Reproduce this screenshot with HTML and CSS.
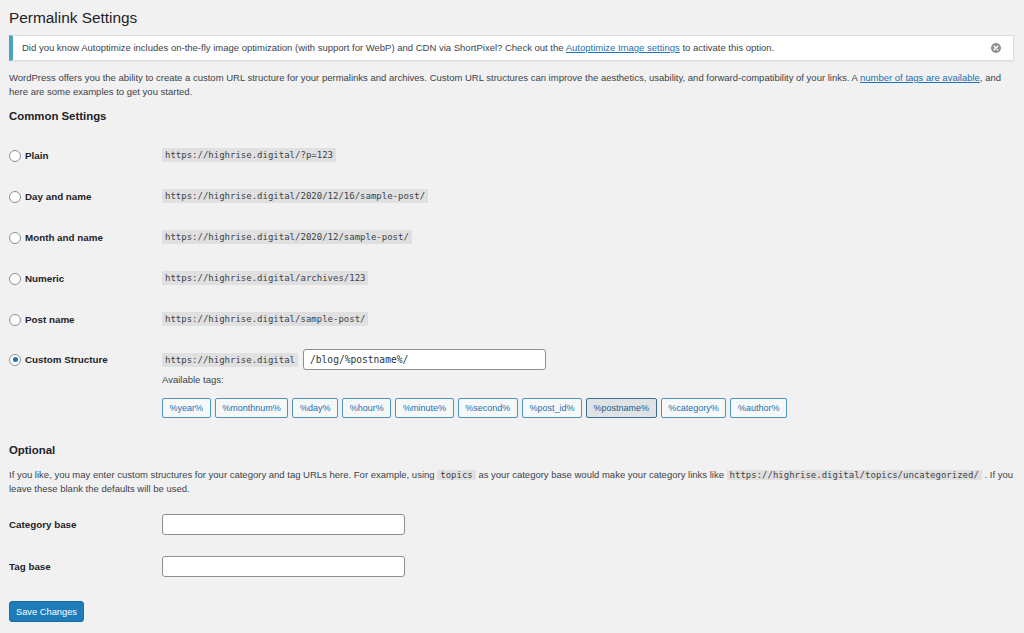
FILE: index.html
```html
<!DOCTYPE html>
<html lang="en">
<head>
<meta charset="utf-8">
<title>Permalink Settings</title>
<link rel="stylesheet" href="styles.css">
</head>
<body>
<div class="wrap">
  <h1 class="title">Permalink Settings</h1>
  <div class="notice">
    <p>Did you know Autoptimize includes on-the-fly image optimization (with support for WebP) and CDN via ShortPixel? Check out the <a href="#">Autoptimize Image settings</a> to activate this option.</p>
    <span class="dismiss"><svg width="10" height="10" viewBox="0 0 10 10"><circle cx="5" cy="5" r="5" fill="#8c8f94"/><path d="M3.2 3.2 L6.8 6.8 M6.8 3.2 L3.2 6.8" stroke="#fff" stroke-width="1.4" stroke-linecap="round"/></svg></span>
  </div>
  <p class="intro">WordPress offers you the ability to create a custom URL structure for your permalinks and archives. Custom URL structures can improve the aesthetics, usability, and forward-compatibility of your links. A <a href="#">number of tags are available</a>, and here are some examples to get you started.</p>
  <h2 class="section">Common Settings</h2>
  <div class="form">
    <div class="row">
      <label class="lbl"><span class="radio"></span>Plain</label>
      <div class="val"><code>https://highrise.digital/?p=123</code></div>
    </div>
    <div class="row">
      <label class="lbl"><span class="radio"></span>Day and name</label>
      <div class="val"><code>https://highrise.digital/2020/12/16/sample-post/</code></div>
    </div>
    <div class="row">
      <label class="lbl"><span class="radio"></span>Month and name</label>
      <div class="val"><code>https://highrise.digital/2020/12/sample-post/</code></div>
    </div>
    <div class="row">
      <label class="lbl"><span class="radio"></span>Numeric</label>
      <div class="val"><code>https://highrise.digital/archives/123</code></div>
    </div>
    <div class="row">
      <label class="lbl"><span class="radio"></span>Post name</label>
      <div class="val"><code>https://highrise.digital/sample-post/</code></div>
    </div>
    <div class="row custom">
      <label class="lbl"><span class="radio checked"></span>Custom Structure</label>
      <div class="val">
        <div class="structure"><code>https://highrise.digital</code><span class="input wide mono">/blog/%postname%/</span></div>
        <div class="avail">Available tags:</div>
        <div class="tags">
          <span class="tag">%year%</span>
          <span class="tag">%monthnum%</span>
          <span class="tag">%day%</span>
          <span class="tag">%hour%</span>
          <span class="tag">%minute%</span>
          <span class="tag">%second%</span>
          <span class="tag">%post_id%</span>
          <span class="tag active">%postname%</span>
          <span class="tag">%category%</span>
          <span class="tag">%author%</span>
        </div>
      </div>
    </div>
  </div>
  <h2 class="section optional">Optional</h2>
  <p class="intro opt">If you like, you may enter custom structures for your category and tag URLs here. For example, using <code>topics</code> as your category base would make your category links like <code>https://highrise.digital/topics/uncategorized/</code> . If you leave these blank the defaults will be used.</p>
  <div class="form opt-form">
    <div class="row2">
      <label class="lbl plain">Category base</label>
      <span class="input"></span>
    </div>
    <div class="row2">
      <label class="lbl plain">Tag base</label>
      <span class="input"></span>
    </div>
  </div>
  <button class="save">Save Changes</button>
</div>
</body>
</html>
```
FILE: styles.css
```css
html, body {
  margin: 0;
  padding: 0;
  background: #f1f1f1;
}
body {
  font-family: "Liberation Sans", Arial, sans-serif;
  font-size: 9.5px;
  color: #3c434a;
}
.wrap {
  padding: 0 10px 0 9px;
}
a {
  color: #2271b1;
}
.title {
  margin: 8px 0 0;
  font-size: 15.4px;
  line-height: 20px;
  font-weight: 400;
  color: #1d2327;
}
.notice {
  margin-top: 7px;
  height: 26px;
  box-sizing: border-box;
  background: #fff;
  border: 1px solid #dcdcde;
  border-left: 4px solid #4ba3c0;
  display: flex;
  align-items: center;
  justify-content: space-between;
  padding: 0 12px 0 9px;
  box-shadow: 0 1px 1px rgba(0,0,0,.04);
}
.notice p {
  margin: 0;
  line-height: 14px;
}
.dismiss {
  display: flex;
}
.intro {
  margin: 10px 0 0;
  line-height: 14px;
}
.section {
  margin: 10px 0 0;
  font-size: 11.4px;
  line-height: 14px;
  font-weight: 700;
  color: #1d2327;
}
.form {
  margin-top: 12px;
}
.row {
  display: grid;
  grid-template-columns: 153px 1fr;
  padding: 13px 0;
  line-height: 15px;
}
.row.custom {
  padding: 9px 0 0;
}
.row.custom .lbl {
  height: 21px;
}
.lbl {
  display: flex;
  align-items: center;
  font-size: 9.8px;
  font-weight: 700;
  color: #1d2327;
}
.radio {
  width: 12px;
  height: 12px;
  box-sizing: border-box;
  border: 1px solid #8c8f94;
  border-radius: 50%;
  background: #fff;
  margin-right: 4px;
  display: flex;
  align-items: center;
  justify-content: center;
}
.radio.checked::after {
  content: "";
  width: 5px;
  height: 5px;
  border-radius: 50%;
  background: #2271b1;
}
.val {
  display: flex;
  flex-direction: column;
  align-items: flex-start;
}
code {
  font-family: "DejaVu Sans Mono", monospace;
  font-size: 9px;
  line-height: 14px;
  padding: 0 3px;
  background: rgba(0,0,0,.07);
  color: #3c434a;
}
.structure {
  display: flex;
  align-items: center;
  gap: 5px;
}
.input {
  display: flex;
  align-items: center;
  width: 243px;
  height: 21px;
  box-sizing: border-box;
  background: #fff;
  border: 1px solid #8c8f94;
  border-radius: 3px;
  padding: 0 6px;
  color: #2c3338;
}
.input.wide {
  width: 243px;
}
.mono {
  font-family: "DejaVu Sans Mono", monospace;
  font-size: 9.6px;
}
.avail {
  margin-top: 3px;
  line-height: 14px;
}
.tags {
  margin-top: 11px;
  display: flex;
  gap: 4px;
}
.tag {
  height: 20px;
  box-sizing: border-box;
  display: flex;
  align-items: center;
  padding: 0 6.6px;
  border: 1px solid #4f94bf;
  border-radius: 2px;
  background: #f6f7f7;
  color: #2271b1;
  font-size: 9px;
}
.tag.active {
  background: #dfe3e6;
  border-color: #3d6f8e;
  color: #135e96;
}
.section.optional {
  margin-top: 25px;
}
.intro.opt {
  margin-top: 11px;
}
.opt-form {
  margin-top: 18px;
  display: flex;
  flex-direction: column;
  gap: 21px;
}
.row2 {
  display: grid;
  grid-template-columns: 153px 243px;
  align-items: center;
}
.row2 .lbl {
  height: 21px;
}
.save {
  margin-top: 24px;
  height: 21px;
  padding: 0 6px;
  background: #1e7cba;
  border: 1px solid #1a6ea6;
  border-radius: 3px;
  color: #fff;
  font-family: "Liberation Sans", Arial, sans-serif;
  font-size: 9.3px;
  cursor: pointer;
}
```
